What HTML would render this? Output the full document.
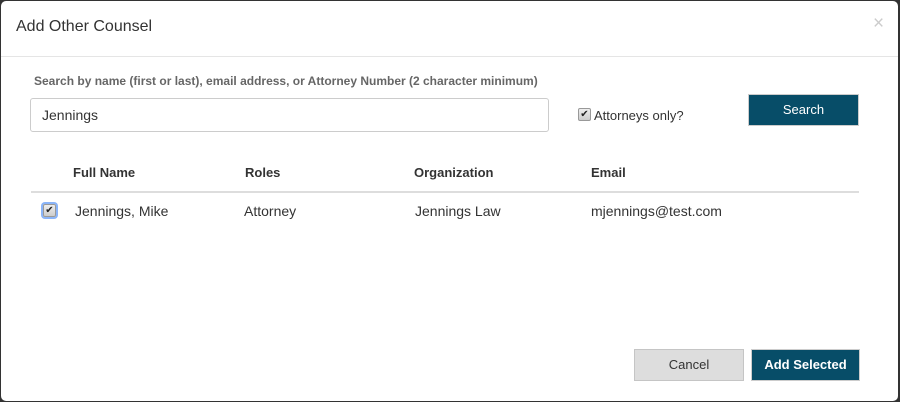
<!DOCTYPE html>
<html><head><meta charset="utf-8"><style>
*{box-sizing:border-box;margin:0;padding:0}
body{width:900px;height:402px;background:#333;font-family:"Liberation Sans",sans-serif;position:relative;overflow:hidden;color:#333}
.m{position:absolute;left:1px;top:1px;width:897px;height:400px;background:#fff;border-radius:5px}
.a{position:absolute;white-space:nowrap}
.t{left:15px;top:17px;font-size:16px;color:#333}
.x{left:872px;top:12px;font-size:19px;color:#ccc}
.hl{position:absolute;left:0;top:55px;width:897px;height:1px;background:#e5e5e5}
.lbl{left:33px;top:73px;font-size:12px;font-weight:bold;color:#666}
.in{position:absolute;left:29px;top:97px;width:519px;height:34px;border:1px solid #ccc;border-radius:3px;font-size:14px;padding:8px 11px}
.cb{position:absolute;width:13px;height:13px;border:1px solid #999;border-radius:2px;background:linear-gradient(#eee,#ccc);font-size:10px;line-height:11px;text-align:center;color:#222}
.btn{position:absolute;font-size:13px;text-align:center;color:#fff;background:#074d68;border:1px solid #ccc}
th,.h{font-size:13px;font-weight:bold;color:#333}
.r{font-size:14px;color:#333}
.line{position:absolute;left:30px;top:190px;width:828px;height:2px;background:#ddd}
</style></head><body>
<div class="m">
<div class="a t">Add Other Counsel</div>
<div class="a x">×</div>
<div class="hl"></div>
<div class="a lbl">Search by name (first or last), email address, or Attorney Number (2 character minimum)</div>
<div class="in">Jennings</div>
<div class="cb" style="left:577px;top:107px">✔</div>
<div class="a" style="left:593px;top:107px;font-size:13px">Attorneys only?</div>
<div class="btn" style="left:747px;top:93px;width:111px;height:32px;line-height:30px">Search</div>
<div class="a h" style="left:72px;top:164px">Full Name</div>
<div class="a h" style="left:244px;top:164px">Roles</div>
<div class="a h" style="left:413px;top:164px">Organization</div>
<div class="a h" style="left:590px;top:164px">Email</div>
<div class="line"></div>
<div class="cb" style="left:42px;top:203px;box-shadow:0 0 0 2px #8ab4f8">✔</div>
<div class="a r" style="left:74px;top:202px">Jennings, Mike</div>
<div class="a r" style="left:243px;top:202px">Attorney</div>
<div class="a r" style="left:414px;top:202px">Jennings Law</div>
<div class="a r" style="left:590px;top:202px">mjennings@test.com</div>
<div class="btn" style="left:633px;top:348px;width:110px;height:32px;line-height:30px;background:#ddd;color:#333;border-color:#c5c5c5">Cancel</div>
<div class="btn" style="left:750px;top:348px;width:109px;height:32px;line-height:30px;font-weight:bold">Add Selected</div>
</div>
</body></html>
